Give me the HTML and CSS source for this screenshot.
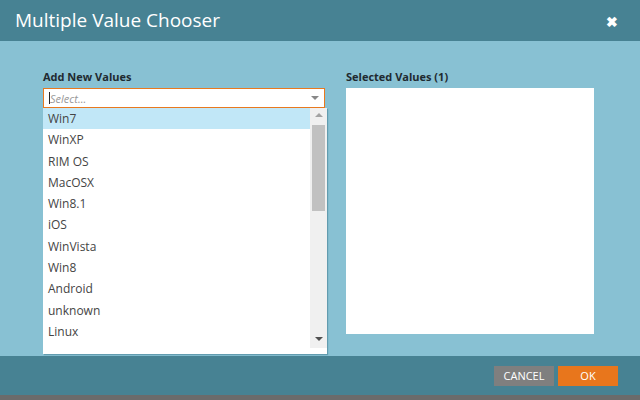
FILE: index.html
```html
<!DOCTYPE html>
<html lang="en">
<head>
    <meta charset="UTF-8">
    <title>Multiple Value Chooser</title>
    <link rel="stylesheet" href="styles.css">
</head>
<body>
    <div class="dialog">
        <div class="dialog-header">
            <span class="dialog-title">Multiple Value Chooser</span>
            <span class="close">&#x2716;</span>
        </div>

        <div class="dialog-body">
            <div class="column add-column">
                <div class="label">Add New Values</div>
                <div class="select">
                    <span class="caret"></span><span class="placeholder">Select...</span>
                    <span class="arrow"></span>
                </div>
                <div class="dropdown">
                    <ul class="options">
                        <li class="active">Win7</li>
                        <li>WinXP</li>
                        <li>RIM OS</li>
                        <li>MacOSX</li>
                        <li>Win8.1</li>
                        <li>iOS</li>
                        <li>WinVista</li>
                        <li>Win8</li>
                        <li>Android</li>
                        <li>unknown</li>
                        <li>Linux</li>
                    </ul>
                    <div class="scrollbar">
                        <span class="scroll-up"></span>
                        <span class="thumb"></span>
                        <span class="scroll-down"></span>
                    </div>
                </div>
            </div>
            <div class="column selected-column">
                <div class="label">Selected Values (1)</div>
                <div class="selected-box"></div>
            </div>
        </div>

        <div class="dialog-footer">
            <button class="btn btn-cancel">CANCEL</button>
            <button class="btn btn-ok">OK</button>
        </div>
        <div class="bottom-strip"></div>
    </div>
</body>
</html>
```

FILE: styles.css
```css
body {
    margin: 0;
    font-family: 'Open Sans', 'Noto Sans', sans-serif;
    background-color: #88c1d3;
}
.dialog {
    width: 640px;
    height: 400px;
    display: flex;
    flex-direction: column;
    overflow: hidden;
}
.dialog-header {
    height: 41px;
    flex-shrink: 0;
    background-color: #478293;
    display: flex;
    align-items: center;
    justify-content: space-between;
    padding: 0 22px 0 15px;
    color: #fff;
}
.dialog-title {
    font-size: 19px;
    margin-top: -1px;
}
.close {
    font-size: 14px;
    font-weight: bold;
    margin-top: 2px;
}
.dialog-body {
    flex: 1;
    min-height: 0;
    background-color: #88c1d3;
    display: flex;
    gap: 21px;
    padding: 29px 0 0 43px;
    box-sizing: border-box;
}
.column {
    position: relative;
}
.add-column {
    width: 282px;
}
.selected-column {
    width: 248px;
}
.label {
    font-size: 11px;
    font-weight: bold;
    color: #1f2a30;
    line-height: 14px;
    margin-bottom: 4px;
}
.select {
    height: 20px;
    box-sizing: border-box;
    border: 1px solid #e8791f;
    background-color: #fff;
    display: flex;
    align-items: center;
    padding-left: 5px;
    position: relative;
}
.caret {
    width: 1px;
    height: 12px;
    background-color: #222;
}
.placeholder {
    font-size: 11px;
    font-style: italic;
    color: #999;
}
.arrow {
    position: absolute;
    right: 5px;
    top: 7px;
    border-left: 4px solid transparent;
    border-right: 4px solid transparent;
    border-top: 4px solid #888;
}
.dropdown {
    position: absolute;
    top: 38px;
    left: 0;
    width: 284px;
    height: 246px;
    background-color: #fff;
    display: flex;
    box-shadow: 1px 1px 1px rgba(60, 120, 140, 0.5);
}
.options {
    list-style: none;
    margin: 0;
    padding: 0;
    flex: 1;
}
.options li {
    height: 21.3px;
    line-height: 21.3px;
    padding-left: 5px;
    font-size: 12px;
    color: #444;
}
.options li.active {
    background-color: #c1e7f7;
}
.scrollbar {
    width: 17px;
    background-color: #f0f0f0;
    position: relative;
    margin-bottom: 6px;
}
.scroll-up {
    position: absolute;
    top: 5px;
    left: 5px;
    border-left: 4px solid transparent;
    border-right: 4px solid transparent;
    border-bottom: 4px solid #a3a3a3;
}
.thumb {
    position: absolute;
    top: 17px;
    left: 2px;
    width: 13px;
    height: 86px;
    background-color: #c1c1c1;
}
.scroll-down {
    position: absolute;
    bottom: 7px;
    left: 5px;
    border-left: 4px solid transparent;
    border-right: 4px solid transparent;
    border-top: 4px solid #505050;
}
.selected-box {
    height: 246px;
    background-color: #fff;
}
.dialog-footer {
    height: 39px;
    flex-shrink: 0;
    background-color: #478293;
    display: flex;
    align-items: center;
    justify-content: flex-end;
    gap: 4px;
    padding-right: 22px;
}
.btn {
    width: 60px;
    height: 20px;
    border: none;
    color: #fff;
    font-family: 'Open Sans', sans-serif;
    font-size: 11px;
    padding: 0;
}
.btn-cancel {
    background-color: #7f7f7f;
}
.btn-ok {
    background-color: #e8761c;
}
.bottom-strip {
    height: 5px;
    flex-shrink: 0;
    background-color: #6b6b6b;
}
```
